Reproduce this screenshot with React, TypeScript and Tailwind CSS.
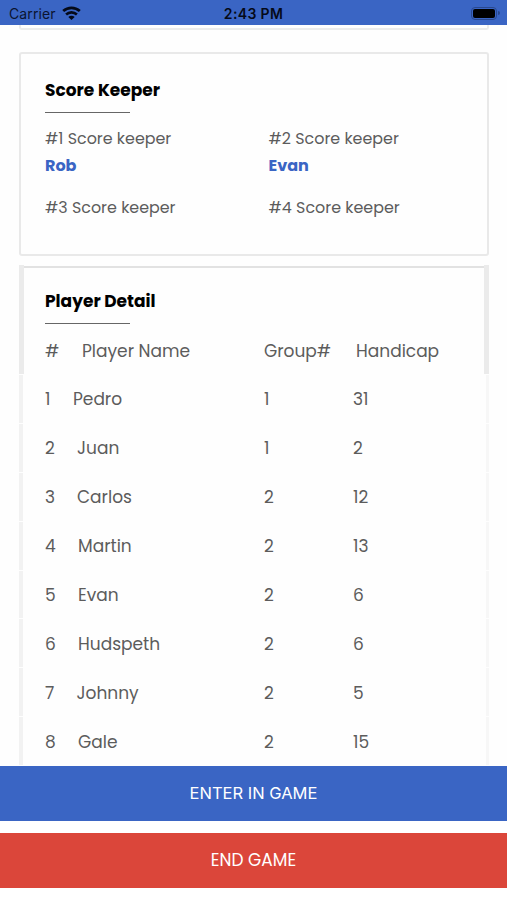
import React from "react";

type Player = {
  id: number;
  name: string;
  group: number;
  handicap: number;
  inset: string;
};

const players: Player[] = [
  { id: 1, name: "Pedro", group: 1, handicap: 31, inset: "w-[28px]" },
  { id: 2, name: "Juan", group: 1, handicap: 2, inset: "w-[32px]" },
  { id: 3, name: "Carlos", group: 2, handicap: 12, inset: "w-[32px]" },
  { id: 4, name: "Martin", group: 2, handicap: 13, inset: "w-[33px]" },
  { id: 5, name: "Evan", group: 2, handicap: 6, inset: "w-[33px]" },
  { id: 6, name: "Hudspeth", group: 2, handicap: 6, inset: "w-[33px]" },
  { id: 7, name: "Johnny", group: 2, handicap: 5, inset: "w-[31.5px]" },
  { id: 8, name: "Gale", group: 2, handicap: 15, inset: "w-[33px]" },
];

function StatusBar() {
  return (
    <header className="z-10 grid h-[25px] shrink-0 grid-cols-3 items-center bg-[#3a65c4] pt-[2px] font-['Inter',sans-serif] text-[14px] leading-[20px] text-[#0b1430]">
      <div className="flex items-center gap-[6px] pl-[9px]">
        <span className="tracking-[0.1px]">Carrier</span>
        <svg width="19" height="14" viewBox="0 0 19 14" fill="none" stroke="#050a18" className="-mt-[2px]">
          <path d="M1.2 5.1C5.9.7 13.1.7 17.8 5.1" strokeWidth="2.7" />
          <path d="M4.1 8.5c3.1-2.9 7.7-2.9 10.8 0" strokeWidth="2.6" />
          <path d="M6.3 11c1.8-1.7 4.6-1.7 6.4 0l-3.2 3z" fill="#050a18" stroke="none" />
        </svg>
      </div>
      <span className="text-center font-semibold tracking-[0.35px] text-[#050a18]">2:43 PM</span>
      <div className="-mt-px flex items-center justify-end pr-[7px]">
        <div className="rounded-[4px] border border-[#29488f] p-[1px]">
          <div className="h-[9px] w-[22px] rounded-[2px] bg-black" />
        </div>
        <div className="ml-px h-[4px] w-[2px] rounded-r-full bg-[#29488f]" />
      </div>
    </header>
  );
}

function Heading({ children }: { children: React.ReactNode }) {
  return (
    <div>
      <h2 className="h-[24px] whitespace-nowrap text-[17px] font-bold leading-[24px] text-black">{children}</h2>
      <div className="mt-[10px] h-[1px] w-[85px] bg-[#666]" />
    </div>
  );
}

function Keeper({ n, name }: { n: number; name?: string }) {
  return (
    <div className="whitespace-nowrap">
      <div className="text-[15.9px] leading-[27px] text-[#5c5c5c]">#{n} Score keeper</div>
      {name && <div className="text-[16px] font-bold leading-[27px] text-[#3a65c4]">{name}</div>}
    </div>
  );
}

export default function App() {
  return (
    <div className="flex h-[900px] w-[507px] flex-col overflow-hidden bg-white font-['Poppins','Inter',sans-serif]">
      <StatusBar />
      <main className="flex min-h-0 flex-1 flex-col overflow-hidden bg-[#fefefe]">
        <div className="mx-[19px] h-[5px] w-[470px] shrink-0 rounded-b-[3px] border-2 border-t-0 border-[#ebebeb]" />
        <section className="mx-[19px] mt-[22px] h-[204px] w-[470px] shrink-0 rounded-[3px] border-2 border-[#e9e9e9] bg-[#fefefe] px-[24px] pt-[24px]">
          <Heading>Score Keeper</Heading>
          <div className="mt-[12px] grid grid-cols-[223.5px_1fr] gap-y-[15px]">
            <Keeper n={1} name="Rob" />
            <Keeper n={2} name="Evan" />
            <Keeper n={3} />
            <Keeper n={4} />
          </div>
        </section>
        <section className="mt-[9px] flex min-h-0 flex-1 flex-col overflow-hidden text-[17px] text-[#5c5c5c]">
          <div className="mx-[19px] h-[109px] w-[470px] shrink-0 border-x-[5px] border-[#ebebeb]">
            <div className="mt-[1px] h-[1.5px] bg-[#e2e2e2]" />
            <div className="pl-[21px] pt-[21px]">
              <Heading>Player Detail</Heading>
              <div className="mt-[14px] flex h-[27px] items-center whitespace-nowrap leading-[27px]">
                <span className="w-[37px]">#</span>
                <span className="w-[182px]">Player Name</span>
                <span className="w-[92px]">Group#</span>
                <span>Handicap</span>
              </div>
            </div>
          </div>
          {players.map((p) => (
            <div key={p.id} className="mx-[19px] h-[48.9px] w-[470px] shrink-0 pt-px">
              <div className="flex h-full items-center whitespace-nowrap border-l-4 border-r-[3px] border-l-[#f2f2f2] border-r-[#f7f7f7] pl-[22px] pt-[2.5px]">
                <span className={p.inset}>{p.id}</span>
                <span className="flex-1">{p.name}</span>
                <span className="w-[89px]">{p.group}</span>
                <span className="w-[133px]">{p.handicap}</span>
              </div>
            </div>
          ))}
        </section>
      </main>
      <footer className="flex h-[134px] shrink-0 flex-col gap-[12px] bg-white text-[17px] text-white">
        <button className="h-[55px] w-full shrink-0 bg-[#3a65c4] font-['Inter',sans-serif] text-[16.5px]">ENTER IN GAME</button>
        <button className="h-[55px] w-full shrink-0 bg-[#db463a] pt-px">END GAME</button>
      </footer>
    </div>
  );
}
